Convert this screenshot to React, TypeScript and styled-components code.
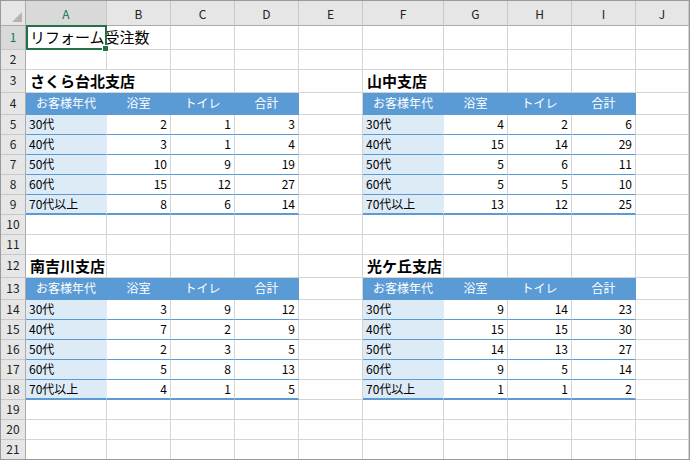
import React from "react";
import styled, { createGlobalStyle, css } from "styled-components";

type Kind = "plain" | "title" | "branch" | "head" | "label" | "num";

type CellData = {
  text?: string;
  kind: Kind;
  last?: boolean;
  spill?: boolean;
};

const COLS = ["A", "B", "C", "D", "E", "F", "G", "H", "I", "J"];
const ROW_HEIGHTS = [24, 20, 23, 22, 20, 20, 20, 20, 20, 20, 20, 23, 22, 20, 20, 20, 20, 20, 20, 20, 20];
const HEADS = ["お客様年代", "浴室", "トイレ", "合計"];
const AGES = ["30代", "40代", "50代", "60代", "70代以上"];

const BLUE = "#5b9bd5";
const LIGHT = "#ddebf7";
const GRID = "#d4d4d4";

const branches: { name: string; row: number; col: number; data: number[][] }[] = [
  { name: "さくら台北支店", row: 3, col: 0, data: [[2, 1, 3], [3, 1, 4], [10, 9, 19], [15, 12, 27], [8, 6, 14]] },
  { name: "山中支店", row: 3, col: 5, data: [[4, 2, 6], [15, 14, 29], [5, 6, 11], [5, 5, 10], [13, 12, 25]] },
  { name: "南吉川支店", row: 12, col: 0, data: [[3, 9, 12], [7, 2, 9], [2, 3, 5], [5, 8, 13], [4, 1, 5]] },
  { name: "光ケ丘支店", row: 12, col: 5, data: [[9, 14, 23], [15, 15, 30], [14, 13, 27], [9, 5, 14], [1, 1, 2]] },
];

function buildSheet() {
  const sheet: CellData[][] = ROW_HEIGHTS.map(() => COLS.map(() => ({ kind: "plain" as Kind })));
  sheet[0][0] = { kind: "title", text: "リフォーム受注数", spill: true };
  branches.forEach((b) => {
    const r = b.row - 1;
    sheet[r][b.col] = { kind: "branch", text: b.name, spill: b.name.length > 5 };
    HEADS.forEach((h, i) => {
      sheet[r + 1][b.col + i] = { kind: "head", text: h };
    });
    b.data.forEach((vals, j) => {
      const last = j === b.data.length - 1;
      sheet[r + 2 + j][b.col] = { kind: "label", text: AGES[j], last };
      vals.forEach((v, i) => {
        sheet[r + 2 + j][b.col + 1 + i] = { kind: "num", text: String(v), last };
      });
    });
  });
  return sheet;
}

const GlobalStyle = createGlobalStyle`
  html, body {
    margin: 0;
    padding: 0;
    background: #fff;
    font-family: "Noto Sans CJK JP", "Noto Sans", sans-serif;
  }
`;

const Window = styled.div`
  width: 690px;
  height: 460px;
  box-sizing: border-box;
  border: 1px solid #9a9a9a;
  overflow: hidden;
  background: #fff;
`;

const Sheet = styled.div`
  display: grid;
  grid-template-columns: 25px 81px 64px 64px 64px 64px 81px 64px 64px 64px 1fr;
  grid-template-rows: 25px ${ROW_HEIGHTS.map((h) => `${h}px`).join(" ")};
`;

const Corner = styled.div`
  position: relative;
  background: #e6e6e6;
  border-right: 1px solid #ababab;
  border-bottom: 1px solid #ababab;
  box-sizing: border-box;

  &::after {
    content: "";
    position: absolute;
    right: 3px;
    bottom: 3px;
    width: 0;
    height: 0;
    border-left: 10px solid transparent;
    border-bottom: 10px solid #b4b4b4;
  }
`;

const ColHead = styled.div<{ $active?: boolean }>`
  display: flex;
  align-items: center;
  justify-content: center;
  box-sizing: border-box;
  background: ${(p) => (p.$active ? "#d9d9d9" : "#e6e6e6")};
  border-right: 1px solid #c8c8c8;
  border-bottom: 1px solid #ababab;
  color: ${(p) => (p.$active ? "#217346" : "#222")};
  font-size: 12px;
  line-height: 1;
  padding-top: 1px;
`;

const RowHead = styled.div<{ $active?: boolean }>`
  display: flex;
  align-items: center;
  justify-content: center;
  box-sizing: border-box;
  background: ${(p) => (p.$active ? "#d9d9d9" : "#e6e6e6")};
  border-right: 1px solid #ababab;
  border-bottom: 1px solid #c8c8c8;
  color: ${(p) => (p.$active ? "#217346" : "#222")};
  font-size: 12px;
  line-height: 1;
  padding-bottom: 2px;
`;

const kindStyles: Record<Kind, ReturnType<typeof css>> = {
  plain: css``,
  title: css`
    font-size: 15px;
    padding-left: 4px;
  `,
  branch: css`
    font-size: 15px;
    font-weight: 700;
    padding-left: 4px;
  `,
  head: css`
    background: ${BLUE};
    color: #fff;
    justify-content: center;
    border-right-color: ${BLUE};
    border-bottom-color: ${BLUE};
  `,
  label: css`
    background: ${LIGHT};
    border-right-color: ${LIGHT};
    border-bottom-color: ${BLUE};
    padding-left: 3px;
  `,
  num: css`
    justify-content: flex-end;
    border-bottom-color: ${BLUE};
    padding-right: 3px;
  `,
};

const Cell = styled.div<{ $kind: Kind; $last?: boolean; $spill?: boolean }>`
  position: relative;
  display: flex;
  align-items: center;
  box-sizing: border-box;
  background: #fff;
  border-right: 1px solid ${GRID};
  border-bottom: 1px solid ${GRID};
  color: #000;
  font-size: 12px;
  line-height: 1;
  white-space: nowrap;
  padding-bottom: 2px;
  ${(p) => kindStyles[p.$kind]}
  ${(p) =>
    p.$last &&
    css`
      border-bottom-width: 2px;
      padding-bottom: 1px;
    `}
  ${(p) =>
    p.$spill &&
    css`
      overflow: visible;
      z-index: 2;
      border-right-color: transparent;
    `}
`;

const Selection = styled.div`
  position: absolute;
  top: -1px;
  left: 0;
  right: -1px;
  bottom: -1px;
  border: 2px solid #217346;
  box-sizing: border-box;
  pointer-events: none;
`;

const Handle = styled.div`
  position: absolute;
  right: -4px;
  bottom: -4px;
  width: 5px;
  height: 5px;
  background: #217346;
  border: 1px solid #fff;
`;

export default function App() {
  const sheet = buildSheet();
  return (
    <Window>
      <GlobalStyle />
      <Sheet>
        <Corner />
        {COLS.map((c, i) => (
          <ColHead key={c} $active={i === 0}>
            {c}
          </ColHead>
        ))}
        {sheet.map((row, r) => (
          <React.Fragment key={r}>
            <RowHead $active={r === 0}>{r + 1}</RowHead>
            {row.map((cell, c) => (
              <Cell key={c} $kind={cell.kind} $last={cell.last} $spill={cell.spill}>
                {cell.text}
                {r === 0 && c === 0 && (
                  <Selection>
                    <Handle />
                  </Selection>
                )}
              </Cell>
            ))}
          </React.Fragment>
        ))}
      </Sheet>
    </Window>
  );
}
